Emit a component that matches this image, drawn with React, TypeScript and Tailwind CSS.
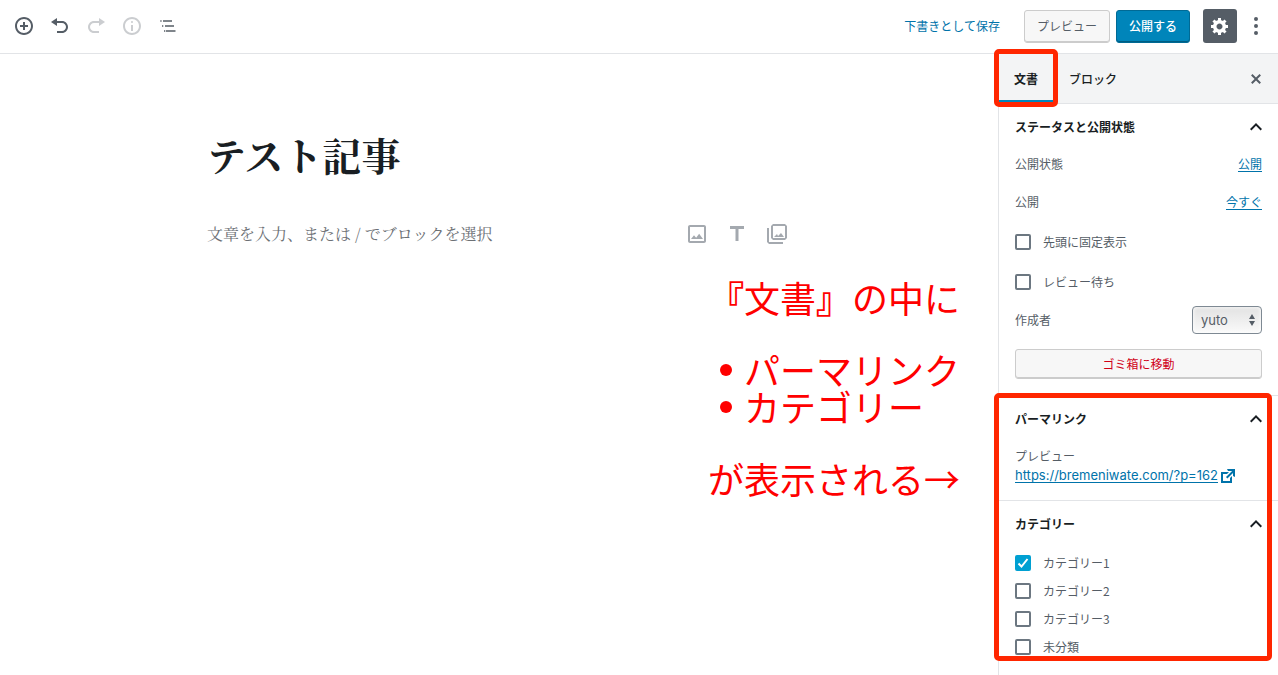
import type { ReactNode } from "react";

const ICONS = {
  insert: "M10 1c-5 0-9 4-9 9s4 9 9 9 9-4 9-9-4-9-9-9zm0 16c-3.9 0-7-3.1-7-7s3.1-7 7-7 7 3.1 7 7-3.1 7-7 7zm1-11H9v3H6v2h3v3h2v-3h3V9h-3V6z",
  undo: "M12 5H7V2L1 6l6 4V7h5c2.2 0 4 1.8 4 4s-1.8 4-4 4H7v2h5c3.3 0 6-2.7 6-6s-2.7-6-6-6z",
  redo: "M8 5h5V2l6 4-6 4V7H8c-2.2 0-4 1.8-4 4s1.8 4 4 4h5v2H8c-3.3 0-6-2.7-6-6s2.7-6 6-6z",
  info: "M9 15h2V9H9v6zm1-10c-.5 0-1 .5-1 1s.5 1 1 1 1-.5 1-1-.5-1-1-1zm0-4c-5 0-9 4-9 9s4 9 9 9 9-4 9-9-4-9-9-9zm0 16c-3.9 0-7-3.1-7-7s3.1-7 7-7 7 3.1 7 7-3.1 7-7 7z",
  outline: "M2.3 4.2h1.3v1.6H2.3zM5 4.2h9v1.6H5zM4 9.2h1.3v1.6H4zM7 9.2h9v1.6H7zM6 14.2h1.3v1.6H6zM8 14.2h9.5v1.6H8z",
  gear: "M18 12h-2.18c-.17.7-.44 1.35-.81 1.93l1.54 1.54-2.1 2.1-1.54-1.54c-.58.36-1.23.63-1.91.79V19H8v-2.18c-.68-.16-1.33-.43-1.91-.79l-1.54 1.54-2.12-2.12 1.54-1.54c-.36-.58-.63-1.23-.79-1.91H1V9.03h2.17c.16-.7.44-1.35.8-1.94L2.43 5.55l2.1-2.1 1.54 1.54c.58-.37 1.24-.64 1.93-.81V2h3v2.18c.68.16 1.33.43 1.91.79l1.54-1.54 2.12 2.12-1.54 1.54c.36.59.64 1.24.8 1.94H18V12zm-8.5 1.5c1.66 0 3-1.34 3-3s-1.34-3-3-3-3 1.34-3 3 1.34 3 3 3z",
  more: "M10 1a2 2 0 110 4 2 2 0 010-4zm0 7a2 2 0 110 4 2 2 0 010-4zm0 7a2 2 0 110 4 2 2 0 010-4z",
  close: "M14.95 6.46L11.41 10l3.54 3.54-1.41 1.41L10 11.42l-3.53 3.53-1.42-1.42L8.58 10 5.05 6.47l1.42-1.42L10 8.58l3.54-3.53z",
  external: "M9 3h8v8l-2-1V6.92l-5.6 5.59-1.41-1.41L14.08 5H10zm3 12v-3l2-2v7H3V6h8L9 8H5v7h7z",
};

const BLOCKS = [
  ["画像", "M19 5v14H5V5h14m0-2H5c-1.1 0-2 .9-2 2v14c0 1.1.9 2 2 2h14c1.1 0 2-.9 2-2V5c0-1.1-.9-2-2-2zM14.14 11.86l-3 3.87L9 13.14 6 17h12z"],
  ["見出し", "M5 4v3h5.5v12h3V7H19V4z"],
  ["ギャラリー", "M20 4v12H8V4h12m0-2H8L6 4v12l2 2h12l2-2V4l-2-2zM12 12l1 2 3-3 3 4H9zM2 6v14l2 2h14v-2H4V6H2z"],
] as const;

const CATEGORIES = [
  ["カテゴリー1", true],
  ["カテゴリー2", false],
  ["カテゴリー3", false],
  ["未分類", false],
] as const;

export default function App() {
  return (
    <div className="flex min-h-screen flex-col bg-white font-['Noto_Sans_CJK_JP',sans-serif] text-xs text-[#555d66]">
      <Header />
      <div className="flex flex-1">
        <Editor />
        <Sidebar />
      </div>
    </div>
  );
}

function Icon({ name }: { name: keyof typeof ICONS }) {
  return (
    <svg viewBox="0 0 20 20" className="size-5 shrink-0 fill-current" aria-hidden="true">
      <path d={ICONS[name]} />
    </svg>
  );
}

function ToolButton({ name, label, disabled }: { name: keyof typeof ICONS; label: string; disabled?: boolean }) {
  return (
    <button type="button" aria-label={label} disabled={disabled} className="grid size-9 place-items-center text-[#555d66] disabled:opacity-30">
      <Icon name={name} />
    </button>
  );
}

function Header() {
  return (
    <header className="flex h-[54px] items-center justify-between border-b border-[#e2e4e7] pr-[7px] pb-px pl-1.5">
      <div className="flex">
        <ToolButton name="insert" label="ブロックの追加" />
        <ToolButton name="undo" label="元に戻す" />
        <ToolButton name="redo" label="やり直す" disabled />
        <ToolButton name="info" label="コンテンツ構造" disabled />
        <ToolButton name="outline" label="ブロックナビゲーション" />
      </div>
      <div className="flex items-center">
        <button type="button" className="mr-6 text-[#0073aa]">下書きとして保存</button>
        <button type="button" className="mr-1.5 h-[33px] rounded-[3px] border border-[#ccc] bg-[#f7f7f7] px-3 shadow-[inset_0_-1px_0_#ccc]">
          プレビュー
        </button>
        <button type="button" className="mr-[13px] h-[33px] rounded-[3px] border border-[#006a95] bg-[#0085ba] px-3 font-medium text-white shadow-[inset_0_-1px_0_#005d82]">
          公開する
        </button>
        <button type="button" aria-label="設定" className="grid size-[34px] place-items-center rounded-[3px] bg-[#555d66] text-white">
          <Icon name="gear" />
        </button>
        <button type="button" aria-label="ツールと設定をさらに表示" className="grid h-9 w-[34px] place-items-center pl-1">
          <Icon name="more" />
        </button>
      </div>
    </header>
  );
}

function Editor() {
  return (
    <main className="relative min-w-0 flex-1 pr-0.5">
      <div className="mx-auto flex max-w-[582px] flex-col pt-[71px] font-['Noto_Serif_CJK_JP','Noto_Sans_CJK_JP',serif]">
        <input
          aria-label="タイトル"
          defaultValue="テスト記事"
          className="h-[58px] w-full text-[39px] font-bold text-[#191e23] outline-none"
        />
        <div className="mt-9 flex items-center">
          <input
            aria-label="本文"
            placeholder="文章を入力、または / でブロックを選択"
            className="h-7 min-w-0 flex-1 text-base outline-none placeholder:text-[#6c7075]"
          />
          <div className="flex gap-4 pt-0.5">
            {BLOCKS.map(([label, path]) => (
              <button key={label} type="button" aria-label={label} className="text-[#a4a9af]">
                <svg viewBox="0 0 24 24" className="size-6 fill-current" aria-hidden="true">
                  <path d={path} />
                </svg>
              </button>
            ))}
          </div>
        </div>
      </div>
      <Note />
    </main>
  );
}

// red callout laid over the canvas, pointing at the sidebar
function Note() {
  return (
    <div className="absolute top-[225px] right-[38px] w-[252px] text-[36px] leading-[37px] whitespace-nowrap text-[#f00]">
      <p>
        <span className="font-black">『</span>文書<span className="font-black">』</span>の中に
      </p>
      <ul className="my-[35px]">
        <NoteItem>パーマリンク</NoteItem>
        <NoteItem>カテゴリー</NoteItem>
      </ul>
      <p>が表示される→</p>
    </div>
  );
}

function NoteItem({ children }: { children: ReactNode }) {
  return (
    <li className="flex items-center">
      <span className="grid w-9 place-items-center">
        <span className="size-3 rounded-full bg-[#f00]" />
      </span>
      {children}
    </li>
  );
}

function Sidebar() {
  return (
    <aside className="w-[280px] shrink-0 border-l border-[#e2e4e7]">
      <div className="flex h-[50px] items-stretch border-b border-[#e2e4e7] bg-[#f3f4f5] text-[#191e23]">
        <button type="button" className="relative border-b-[3px] border-[#0085ba] px-[15px] pt-[3px] font-bold">
          文書
          <span className="pointer-events-none absolute -inset-x-[5px] -top-[5px] -bottom-[7px] rounded-[5px] border-[5px] border-[#ff2600]" />
        </button>
        <button type="button" className="px-4 font-medium">ブロック</button>
        <button type="button" aria-label="設定を閉じる" className="mr-3 ml-auto text-[#555d66]">
          <Icon name="close" />
        </button>
      </div>

      <Panel title="ステータスと公開状態">
        <div className="flex h-7 items-center justify-between">
          <span>公開状態</span>
          <a href="#visibility" className="text-[#0073aa] underline underline-offset-2">公開</a>
        </div>
        <div className="mt-2.5 flex h-7 items-center justify-between">
          <span>公開</span>
          <a href="#schedule" className="text-[#0073aa] underline underline-offset-2">今すぐ</a>
        </div>
        <div className="mt-3">
          <CheckRow label="先頭に固定表示" />
        </div>
        <div className="mt-3">
          <CheckRow label="レビュー待ち" />
        </div>
        <div className="mt-2.5 flex items-center justify-between">
          <label htmlFor="author">作成者</label>
          <div className="relative">
            <select
              id="author"
              className="h-7 w-[70px] appearance-none rounded-[4px] border border-[#7e8993] bg-linear-to-b from-[#e2e2e2] to-[#fafafa] pt-0.5 pl-2 font-['Inter',sans-serif] text-[13px] text-[#555d66] shadow-[inset_0_0_4px_#fff]"
            >
              <option>yuto</option>
            </select>
            <svg viewBox="0 0 8 12" className="pointer-events-none absolute top-2 right-1.5 h-3 w-2 fill-[#555d66]" aria-hidden="true">
              <path d="M4 0l3 5H1zM4 12L1 7h6z" />
            </svg>
          </div>
        </div>
        <button type="button" className="mt-[15px] mb-4 h-[30px] w-full rounded-[3px] border border-[#ccc] bg-[#f7f7f7] text-[#d00018] shadow-[inset_0_-1px_0_#ccc]">
          ゴミ箱に移動
        </button>
      </Panel>

      <div className="relative">
        <div className="border-t border-[#e2e4e7]">
          <Panel title="パーマリンク">
            <p className="mt-1 h-5 leading-5">プレビュー</p>
            <a href="https://bremeniwate.com/?p=162" className="mb-3.5 flex h-5 items-center font-['Inter',sans-serif] text-[13px] text-[#0073aa]">
              <span className="underline underline-offset-2">https://bremeniwate.com/?p=162</span>
              <Icon name="external" />
            </a>
          </Panel>
        </div>
        <div className="border-t border-[#e2e4e7]">
          <Panel title="カテゴリー">
            <div className="pt-0.5">
              {CATEGORIES.map(([label, checked]) => (
                <CheckRow key={label} label={label} checked={checked} />
              ))}
            </div>
          </Panel>
        </div>
        <span className="pointer-events-none absolute -top-0.5 right-1.5 bottom-0 -left-[5px] rounded-[5px] border-[5px] border-[#ff2600]" />
      </div>
    </aside>
  );
}

function Panel({ title, children }: { title: string; children: ReactNode }) {
  return (
    <section className="px-4">
      <h2 className="-mr-1.5">
        <button type="button" aria-expanded="true" className="flex h-[46px] w-full items-center justify-between font-bold text-[#191e23]">
          {title}
          <svg viewBox="0 0 24 24" className="size-6 fill-current" aria-hidden="true">
            <path d="M12 8l-6 6 1.41 1.41L12 10.83l4.59 4.58L18 14z" />
          </svg>
        </button>
      </h2>
      {children}
    </section>
  );
}

function CheckRow({ label, checked = false }: { label: string; checked?: boolean }) {
  return (
    <label className="flex h-7 items-center gap-3">
      <span className="grid size-4">
        <input
          type="checkbox"
          defaultChecked={checked}
          className="peer col-start-1 row-start-1 size-4 appearance-none rounded-[2px] border-2 border-[#6c7781] bg-white checked:border-[#00a0d2] checked:bg-[#00a0d2]"
        />
        <svg viewBox="0 0 16 16" className="pointer-events-none invisible col-start-1 row-start-1 size-4 fill-none stroke-white stroke-2 peer-checked:visible" aria-hidden="true">
          <path d="M3.5 8.5l3 3 6-7.5" />
        </svg>
      </span>
      {label}
    </label>
  );
}
